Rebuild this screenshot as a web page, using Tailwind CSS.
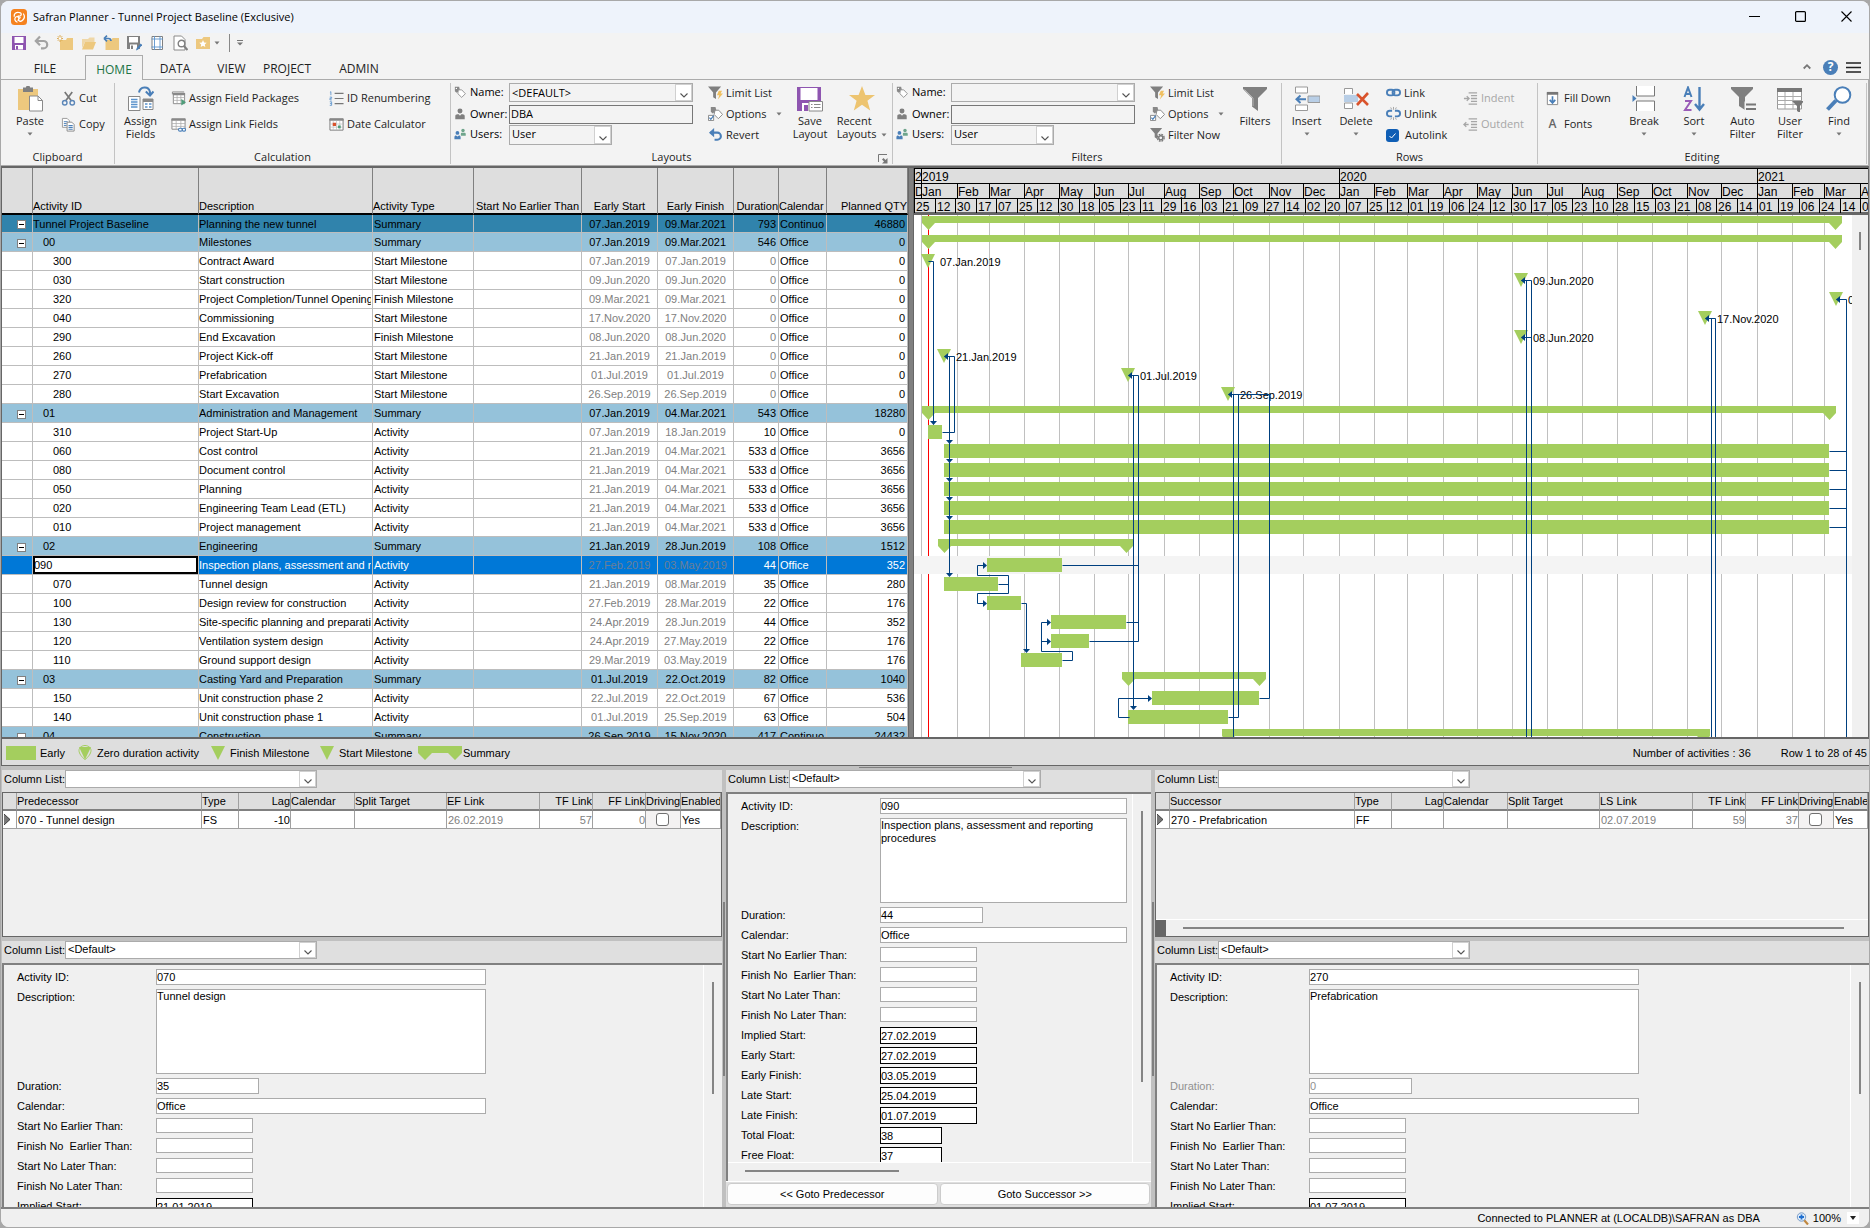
<!DOCTYPE html>
<html lang="en">
<head>
<meta charset="utf-8">
<title>Safran Planner - Tunnel Project Baseline (Exclusive)</title>
<script src="https://cdn.jsdelivr.net/npm/@tailwindcss/browser@4"></script>
</head>
<body class="h-screen overflow-hidden bg-[#a8a8a8] p-px font-['Liberation_Sans',Arial,sans-serif] text-[11px] leading-4 text-black">

<!-- Icon library -->
<svg class="hidden" aria-hidden="true">
  <symbol id="i-app" viewBox="0 0 16 16"><rect width="16" height="16" rx="3.5" fill="#f5821f"/><path d="M3.2 7.2C3 4.600 5 3.200 7.500 3.400c1.900.1 2.900 1 2.700 2.200-.2 1.300-1.700 1.900-3 1.400M6 13c-1.800-.8-2.600-2.500-1.900-4 .6-1.300 2-1.700 3-1 1 .7.900 2.200 0 3.200M12.500 5c1.200 1.800 1 4.300-.7 6-1.400 1.400-3 1.700-3.800.7-.8-1-.2-2.400 1.200-3" fill="none" stroke="#fff" stroke-width="1.300" stroke-linecap="round"/></symbol>
  <symbol id="i-save" viewBox="0 0 16 16"><path d="M1 1h14v14H1z" fill="#8e55b0"/><path d="M3.500 2h9v6h-9zM4 10h8v4.500H4z" fill="#fff"/><path d="M5 11h2v3.500H5z" fill="#8e55b0"/></symbol>
  <symbol id="i-undo" viewBox="0 0 16 16"><path d="M3 6h6.500a3.700 3.700 0 0 1 0 7.400H7" fill="none" stroke="#a3a3a3" stroke-width="2.200"/><path d="M6 1.500L1.800 6 6 10.300" fill="none" stroke="#a3a3a3" stroke-width="2.200"/></symbol>
  <symbol id="i-newf" viewBox="0 0 16 16"><path d="M3 5h6l1-2h6v12H3z" fill="#edc87e"/><path d="M3 0v7M0 3.500h6M.8 1.200l4.400 4.600M5.200 1.200L.8 5.800" stroke="#d9a445" stroke-width=".9"/><circle cx="3" cy="3.500" r="1.200" fill="#fff"/></symbol>
  <symbol id="i-openf" viewBox="0 0 16 16"><path d="M2 4h6l1.500-1.500h5V7H5l-3 6z" fill="#edc87e" opacity=".65"/><path d="M5 7h11l-3 7.500H2z" fill="#edc87e"/></symbol>
  <symbol id="i-prevf" viewBox="0 0 16 16"><path d="M2.500 5h6l1-2H16v12H2.500z" fill="#edc87e"/><path d="M1 3.500h4.500A2.500 2.500 0 0 1 8 6M1 3.500L4 .7M1 3.500L4 6.300" stroke="#4a7fb8" stroke-width="1.700" fill="none"/></symbol>
  <symbol id="i-saveas" viewBox="0 0 16 16"><path d="M1 1h13v13H1z" fill="#808080"/><path d="M3 2h9v5.500H3zM4 9.500h7V14H4z" fill="#fff"/><path d="M5 10.500h2V14H5z" fill="#808080"/><path d="M10 15.500l.7-2.500 4-4.500 1.500 1.500-4 4.500z" fill="#4a7fb8"/></symbol>
  <symbol id="i-grid" viewBox="0 0 16 16"><path d="M3 1.500h10.500v13H3z" fill="#fff" stroke="#808080"/><path d="M5.500 1v14M11 1v14M2.500 4h11.500M2.500 12h11.500" stroke="#5b93cc" stroke-width=".9"/></symbol>
  <symbol id="i-preview" viewBox="0 0 16 16"><path d="M2 1h7.500l3.500 3.500V15H2z" fill="#fff" stroke="#8a8a8a"/><circle cx="9.500" cy="8.500" r="3.300" fill="#fff" stroke="#808080" stroke-width="1.400"/><path d="M12 11l3.500 4" stroke="#808080" stroke-width="2"/></symbol>
  <symbol id="i-fav" viewBox="0 0 16 16"><path d="M1 4h6l1.500-2H15v12H1z" fill="#edc87e"/><path d="M8 5l1.100 2.400 2.600.3-1.900 1.800.5 2.600L8 10.800l-2.300 1.300.5-2.600-1.900-1.800 2.600-.3z" fill="#fff"/></symbol>
  <symbol id="i-paste" viewBox="0 0 26 26"><path d="M1 3h20v21H1z" fill="#edc87e"/><path d="M6 1.500h3a2 2 0 0 1 4 0h3v4.500H6z" fill="#7f7f7f"/><path d="M12.500 10h8.500l4.500 4.500V25H12.500z" fill="#fff" stroke="#8a8a8a"/><path d="M21 10v4.500h4.500" fill="none" stroke="#8a8a8a"/></symbol>
  <symbol id="i-cut" viewBox="0 0 16 16"><path d="M4 1l7 9.500M12 1L5 10.500" stroke="#777" stroke-width="1.800"/><circle cx="4" cy="12.500" r="2.400" fill="none" stroke="#5b86b8" stroke-width="1.500"/><circle cx="12" cy="12.500" r="2.400" fill="none" stroke="#5b86b8" stroke-width="1.500"/></symbol>
  <symbol id="i-copy" viewBox="0 0 16 16"><path d="M1.500 1.500h5l2.500 2.500v7h-7.500z" fill="#fff" stroke="#999"/><path d="M3 5h4M3 7h3M3 9h3" stroke="#4a7fb8"/><path d="M6.500 5.500h5l2.500 2.500v7H6.500z" fill="#fff" stroke="#888"/><path d="M8 9h4.500M8 11h4.500M8 13h4.500" stroke="#4a7fb8" stroke-width="1.200"/></symbol>
  <symbol id="i-assign" viewBox="0 0 26 26"><path d="M11 6.500c1-6 9.500-7 11-.5V9M17.800 5.500l4.200 4 3.500-4" fill="none" stroke="#4a7fb8" stroke-width="2"/><path d="M.5 10.500h11.500v14H.5z" fill="#fff" stroke="#888"/><path d="M3 13.500h6.500M3 16h6.500M3 18.500h6.500M3 21h6.500" stroke="#5b93cc" stroke-width="1.300"/><path d="M15 13h10v10.500H15z" fill="#fff" stroke="#888"/><path d="M15 13h10v3H15z" fill="#888"/><path d="M17 18h2.500M21 18h2.500M17 21h2.500M21 21h2.500" stroke="#5b93cc" stroke-width="1.300"/></symbol>
  <symbol id="i-tbl" viewBox="0 0 16 16"><path d="M1.500 3.500V1H14M2.500 2.500h12v11h-12z" fill="#fff" stroke="#888"/><path d="M2 2h13v2.500H2z" fill="#888"/><path d="M2.500 7h12M2.500 10h12M6.500 4v9M10.500 4v9" stroke="#aaa" stroke-width=".8"/><path d="M11 8.500l5 3.500-5 3.500z" fill="#4f9d7a"/></symbol>
  <symbol id="i-tblink" viewBox="0 0 16 16"><path d="M1 2h14v11H1z" fill="#fff" stroke="#888"/><path d="M.5 1.500h15V4H.5z" fill="#888"/><path d="M1 7h14M1 10h14M5.500 4v9M10.500 4v9" stroke="#aaa" stroke-width=".8"/><rect x="8" y="12" width="4" height="3" rx="1.500" fill="#fff" stroke="#4a7fb8" stroke-width="1.200"/><rect x="12" y="12" width="3.500" height="3" rx="1.500" fill="#fff" stroke="#4a7fb8" stroke-width="1.200"/></symbol>
  <symbol id="i-num" viewBox="0 0 16 16"><path d="M6 2.500h9.500M6 8h9.500M6 13.500h9.500" stroke="#777" stroke-width="1.300"/><path d="M1 1.500l1-.8V4.500M.8 6.500h2v1.300H1V9.500h2M.8 11.500h2v3.800h-2M1 13.400h1.800" fill="none" stroke="#5b93cc" stroke-width=".9"/></symbol>
  <symbol id="i-cal" viewBox="0 0 16 16"><path d="M1 2h14v12H1z" fill="#fff" stroke="#777"/><path d="M.5 1.500h15v2.500H.5z" fill="#888"/><path d="M1 7.500h14M1 10.800h14M4.500 4v10M8 4v10M11.500 4v10" stroke="#bbb" stroke-width=".7"/><path d="M4 6h3.500v3.500H4z" fill="#d9532c"/><path d="M9.500 9h3v3h-3z" fill="#4f9d7a"/></symbol>
  <symbol id="i-tag" viewBox="0 0 14 14"><path d="M1 1h5l1 4-4 3L1 6z" fill="#888"/><path d="M5 4.500h4L13.300 9 9 13.300 4.500 9z" fill="#fff" stroke="#888"/><circle cx="2.800" cy="2.800" r=".8" fill="#fff"/></symbol>
  <symbol id="i-man" viewBox="0 0 14 14"><circle cx="7" cy="3.500" r="2.900" fill="#7f7f7f"/><path d="M1.500 13V9.500c0-1.500 1-2.300 2.500-2.300h1.500L7 9l1.500-1.800H10c1.500 0 2.500.8 2.500 2.300V13z" fill="#7f7f7f"/></symbol>
  <symbol id="i-men" viewBox="0 0 14 14"><circle cx="10.500" cy="3" r="2" fill="#6fa58c"/><path d="M8 9V7c0-1 .6-1.600 1.500-1.600h2.600c1 0 1.600.6 1.600 1.600v2z" fill="#6fa58c"/><circle cx="4" cy="5.800" r="2.200" fill="#4a7fb8"/><path d="M.5 13v-2.500C.5 9.500 1.300 8.700 2.300 8.700L4 10l1.800-1.300c1.200 0 1.900.8 1.900 1.800V13z" fill="#4a7fb8"/></symbol>
  <symbol id="i-limit" viewBox="0 0 16 16"><path d="M0 1.500h14L8.500 8v7l-3-2V8z" fill="#7f7f7f"/><path d="M11.500 6h3.500l-1.500 3H16l-5.500 6.500L12 11h-2.500z" fill="#f0c060"/></symbol>
  <symbol id="i-opt" viewBox="0 0 16 16"><path d="M3 1h5l1 4-4 3-2-2z" fill="#888"/><path d="M7.500 4.500h4l4 4.500-4.500 4.500L6.500 9z" fill="#fff" stroke="#888"/><path d="M.5 10h5.500v5.500H.5z" fill="#fff" stroke="#888"/><path d="M1.500 12.500l1.500 1.700 3-4" stroke="#4a7fb8" stroke-width="1.300" fill="none"/></symbol>
  <symbol id="i-revert" viewBox="0 0 16 16"><path d="M2.500 6h7.500a3.700 3.700 0 0 1 0 7.500H7" fill="none" stroke="#4a7fb8" stroke-width="2.200"/><path d="M6.500 1L1 6l5.500 5z" fill="#4a7fb8"/></symbol>
  <symbol id="i-fnow" viewBox="0 0 16 16"><path d="M0 1h13L8 7v6l-3-2V7z" fill="#7f7f7f"/><circle cx="11.500" cy="11.500" r="3.600" fill="none" stroke="#777" stroke-width="1.400" stroke-dasharray="1.900 .95"/><circle cx="11.500" cy="11.500" r="2.200" fill="#f3f3f3" stroke="#777" stroke-width="1.500"/></symbol>
  <symbol id="i-savelay" viewBox="0 0 26 26"><path d="M0 1h24v24H0z" fill="#8e55b0"/><path d="M3.500 2h17v12h-17zM5 17h14v8H5z" fill="#fff"/><path d="M7 19h4v6H7z" fill="#8e55b0"/><path d="M12 15.500h13.500v9.500H12z" fill="#fff" stroke="#888"/><path d="M14 18.500h1.500M17 18.500h6.500M14 21.500h1.500M17 21.500h6.500" stroke="#888"/></symbol>
  <symbol id="i-star" viewBox="0 0 26 26"><path d="M13 0l3.400 9H26l-7.600 5.800L21.200 24.500 13 18.800 4.800 24.500 7.600 14.800 0 9h9.600z" fill="#edc470"/></symbol>
  <symbol id="i-funnel" viewBox="0 0 26 26"><path d="M1 1h24v2L16 12v13l-6-4.500V12L1 3z" fill="#7f7f7f"/><path d="M2.500 3.500L11 12v8" fill="none" stroke="#b5b5b5"/></symbol>
  <symbol id="i-insert" viewBox="0 0 26 26"><path d="M1.500 7V1h12v6M1.500 19v5.500h12V19z" fill="#fff" stroke="#999"/><path d="M1.500 7h12" stroke="#999"/><path d="M14 10h12v6.500H14z" fill="#b8cee6" stroke="#999"/><path d="M12 13.200H3M6.500 9.500L2.500 13.200l4 3.800" stroke="#4a7fb8" stroke-width="2" fill="none"/></symbol>
  <symbol id="i-delete" viewBox="0 0 26 26"><path d="M1.500 8V2.500h8V8M1.500 17v5.500h8V17z" fill="#fff" stroke="#999"/><path d="M1 9h14v7H1z" fill="#b8cee6"/><path d="M14 8l11 11M25 7L14 19" stroke="#d9532c" stroke-width="2.600"/></symbol>
  <symbol id="i-link" viewBox="0 0 16 16"><rect x="1" y="5" width="8" height="6" rx="3" fill="none" stroke="#4a7fb8" stroke-width="2"/><rect x="7" y="5" width="8" height="6" rx="3" fill="none" stroke="#4a7fb8" stroke-width="2"/></symbol>
  <symbol id="i-unlink" viewBox="0 0 16 16"><path d="M6.500 5H4a3 3 0 0 0 0 6h2.500M9.500 5H12a3 3 0 0 1 0 6H9.500" fill="none" stroke="#4a7fb8" stroke-width="2"/><path d="M8 1v3M8 12v3M5 1.500l1 2M11 1.500l-1 2M5 14.500l1-2M11 14.500l-1-2" stroke="#999" stroke-width=".9"/></symbol>
  <symbol id="i-indent" viewBox="0 0 16 16"><path d="M1 8h5M4 5.500L6.500 8 4 10.500M6 2h9M8.500 5h6.500M8.500 8h6.500M8.500 11h6.500M6 14h9" fill="none" stroke="#a6a6a6" stroke-width="1.400"/></symbol>
  <symbol id="i-outdent" viewBox="0 0 16 16"><path d="M1 8h5M3.500 5.500L1 8l2.500 2.500M6 2h9M8.500 5h6.500M8.500 8h6.500M8.500 11h6.500M6 14h9" fill="none" stroke="#a6a6a6" stroke-width="1.400"/></symbol>
  <symbol id="i-fill" viewBox="0 0 16 16"><path d="M2.500 1.500h11v13h-11z" fill="#fff" stroke="#888"/><path d="M2 1h12v3H2z" fill="#777"/><path d="M8 5.500v7M5 9.500l3 3.200 3-3.200" fill="none" stroke="#4a7fb8" stroke-width="1.800"/></symbol>
  <symbol id="i-break" viewBox="0 0 26 26"><path d="M5.500 0v10h18V0M5.500 25V15h18v10" fill="#fff" stroke="#777"/><path d="M1.500 9l4 3.500-4 3.500z" fill="#4a7fb8"/></symbol>
  <symbol id="i-sort" viewBox="0 0 26 26"><path d="M3.500 11L7 1.500 10.500 11M4.800 8h4.500" fill="none" stroke="#4a7fb8" stroke-width="2"/><path d="M4 15h6L4 24h6.500" fill="none" stroke="#9a5cb8" stroke-width="2"/><path d="M18.500 1v22M14 18l4.500 5.500L23 18" fill="none" stroke="#4a7fb8" stroke-width="2.400"/></symbol>
  <symbol id="i-auto" viewBox="0 0 26 26"><path d="M1 1h22v2l-8 8v13l-6-4V11L1 3z" fill="#7f7f7f"/><path d="M14.500 15.500H26V25H14.500z" fill="#f3f3f3"/><path d="M16 18.500h10M16 23h10" stroke="#777" stroke-width="2"/></symbol>
  <symbol id="i-user" viewBox="0 0 26 26"><path d="M.5 3h24v20H.5z" fill="#fff" stroke="#999"/><path d="M0 2h25v4H0z" fill="#777"/><path d="M.5 10.500h24M.5 14.500h24M.5 18.500h24M8 6v17M16 6v17" stroke="#aaa"/><path d="M15 15h12l-4 5v7l-3-2v-5z" fill="#777"/></symbol>
  <symbol id="i-find" viewBox="0 0 26 26"><path d="M10 14.500L1.500 23.500" stroke="#4a7fb8" stroke-width="4"/><circle cx="16.500" cy="9" r="7.800" fill="#fff" stroke="#4a7fb8" stroke-width="2"/></symbol>
  <symbol id="i-launch" viewBox="0 0 10 10"><path d="M.5 8V.5H9" fill="none" stroke="#777"/><path d="M4 9.500h5.500V4L7.500 6 5.500 4 4 5.500l2 2z" fill="#777"/></symbol>
  <symbol id="i-chev" viewBox="0 0 10 10"><path d="M1.500 3.500L5 7l3.500-3.500" fill="none" stroke="#555" stroke-width="1.100"/></symbol>
  <symbol id="i-arr" viewBox="0 0 6 4"><path d="M.5.500h5L3 3.500z" fill="#777"/></symbol>
</svg>

<div class="flex h-full flex-col overflow-hidden rounded-lg bg-[#f3f3f3]">

  <header class="font-['Open_Sans','Noto_Sans',sans-serif] text-[11px] text-[#1e1e1e]">
    <!-- Title bar -->
    <div class="flex h-8 items-center bg-[#eef3fb] pb-px pl-[10px] pr-[17px]">
      <svg class="size-4"><use href="#i-app"/></svg>
      <h1 class="ml-[6px] flex-1 text-black">Safran Planner - Tunnel Project Baseline (Exclusive)</h1>
      <div class="flex items-center gap-[35px]">
        <button aria-label="Minimize"><svg class="size-[11px]" viewBox="0 0 11 11"><path d="M0 5.500h11" stroke="#000" stroke-width="1.100"/></svg></button>
        <button aria-label="Maximize"><svg class="size-[11px]" viewBox="0 0 11 11"><rect x=".6" y=".6" width="9.800" height="9.800" rx="1" fill="none" stroke="#000" stroke-width="1.200"/></svg></button>
        <button aria-label="Close"><svg class="size-[11px]" viewBox="0 0 11 11"><path d="M.5.500l10 10M10.500.500l-10 10" stroke="#000" stroke-width="1.100"/></svg></button>
      </div>
    </div>
    <!-- Quick access -->
    <div class="flex h-[22px] items-center gap-[7px] pb-[2px] pl-[10px]" id="qat"></div>
    <!-- Tabs -->
    <nav class="flex h-[25px] border-b border-[#ababab] text-[12px]">
      <button class="w-[88px] pt-[3px]">FILE</button>
      <button class="-ml-1 -mb-px w-[58px] border border-b-0 border-[#ababab] bg-[#f3f3f3] pt-[3px] text-[#217346]">HOME</button>
      <button class="w-[64px] pt-[3px]">DATA</button>
      <button class="w-[49px] pt-[3px]">VIEW</button>
      <button class="w-[62px] pt-[3px]">PROJECT</button>
      <button class="w-[82px] pt-[3px]">ADMIN</button>
      <div class="ml-auto flex items-center gap-2 pr-2">
        <button aria-label="Collapse ribbon" class="mr-1"><svg class="size-2" viewBox="0 0 8 8"><path d="M.7 5.500L4 2.200l3.300 3.300" fill="none" stroke="#777" stroke-width="1.800"/></svg></button>
        <button aria-label="Help" class="flex size-[15px] items-center justify-center rounded-full bg-[#4a7fb8] text-[12px] font-bold text-white">?</button>
        <button aria-label="Menu"><svg class="h-[11px] w-[15px]" viewBox="0 0 15 11"><path d="M0 1h15M0 5.500h15M0 10h15" stroke="#222" stroke-width="1.300"/></svg></button>
      </div>
    </nav>
    <!-- Ribbon -->
    <div class="flex h-[85px] border-r border-[#ababab] pt-[3px]" id="ribbon"></div>
    <div class="h-[3px] border-t border-[#ababab] bg-[#666]"></div>
  </header>

  <!-- Grid and Gantt -->
  <main class="flex min-h-0 flex-[569_1_0px] border-l border-[#666] bg-white">
    <div class="w-[906px] shrink-0 overflow-hidden">
      <table class="w-full table-fixed border-separate border-spacing-0">
        <colgroup><col class="w-[31px]"><col class="w-[166px]"><col class="w-[174px]"><col class="w-[101px]"><col class="w-[108px]"><col class="w-[76px]"><col class="w-[76px]"><col class="w-[45px]"><col class="w-[48px]"><col class="w-[81px]"></colgroup>
        <thead><tr class="bg-[#dedede]" id="gridhead"></tr></thead>
        <tbody id="grid"></tbody>
      </table>
    </div>
    <div class="w-[6px] shrink-0 border-x border-[#666] bg-[#808080]"></div>
    <div class="flex min-w-0 flex-1 flex-col border-r border-[#666]">
      <svg class="h-[47px] w-full shrink-0 bg-[#dedede]" id="scale"></svg>
      <div class="flex min-h-0 flex-1">
        <svg class="h-full min-w-0 flex-1" id="gantt"></svg>
        <div class="w-[16px] bg-[#f0f0f0] pl-[7px] pt-[17px]"><div class="h-[18px] w-0.5 bg-[#858585]"></div></div>
      </div>
    </div>
  </main>

  <!-- Legend -->
  <div class="flex h-[29px] shrink-0 items-center border-b border-l border-t-2 border-[#666] bg-[#dedede] pl-1 pr-[2px] pt-px">
    <svg class="h-[14px] w-[30px]"><path d="M0 0h30v14H0z" fill="#a4ce5e"/></svg><span class="ml-1 w-[38px]">Early</span>
    <svg class="h-[15px] w-[14px]" viewBox="0 0 14 15"><path d="M7 .5c3 0 6 2 6 5s-3 7-6 9c-3-2-6-6-6-9s3-5 6-5z" fill="none" stroke="#a4ce5e"/><path d="M1 2h12L7 14.500z" fill="#a4ce5e"/></svg><span class="ml-[5px] w-[114px]">Zero duration activity</span>
    <svg class="h-[14px] w-[14px]"><path d="M0 0h14L7 14z" fill="#a4ce5e"/></svg><span class="ml-[5px] w-[90px]">Finish Milestone</span>
    <svg class="h-[14px] w-[14px]"><path d="M0 0h14L7 14z" fill="#a4ce5e"/></svg><span class="ml-[5px] w-[79px]">Start Milestone</span>
    <svg class="h-[14px] w-[44px]"><path d="M0 0h44v7l-7 7-7-7H14l-7 7-7-7z" fill="#a4ce5e"/></svg><span class="ml-px">Summary</span>
    <span class="ml-auto">Number of activities : 36</span><span class="ml-[30px]">Row 1 to 28 of 45</span>
  </div>
  <div class="flex h-1 shrink-0 justify-center bg-[#c0c0c0]"><div class="mt-px h-px w-[153px] bg-[#808080]"></div></div>

  <!-- Detail panels -->
  <section class="flex min-h-0 flex-[437_1_0px] bg-[#c0c0c0] pl-px" id="panels"></section>

  <!-- Status bar -->
  <footer class="flex h-5 shrink-0 items-center justify-end border-t-2 border-[#808080] bg-[#f0f0f0] pr-[10px]">
    <span class="mr-[36px]">Connected to PLANNER at (LOCALDB)\SAFRAN as DBA</span>
    <svg class="mr-1 size-[13px]" viewBox="0 0 13 13"><path d="M8 8l4 4.500" stroke="#c08840" stroke-width="2.200"/><circle cx="5.500" cy="5" r="4.200" fill="#dceaf8" stroke="#7a9cc6"/><path d="M5.500 2.500v5M3 5h5" stroke="#1f6fd0" stroke-width="1.800"/></svg>
    <span>100%</span>
    <button aria-label="Zoom level" class="ml-[6px] flex size-[12px] items-center justify-center bg-white"><svg class="h-1 w-[6px]" viewBox="0 0 6 4"><path d="M0 0h6L3 4z" fill="#222"/></svg></button>
  </footer>
</div>

<script>
const $ = id => document.getElementById(id);
const icon = (n, c) => `<svg class="${c || 'size-[15px] shrink-0'}"><use href="#i-${n}"/></svg>`;

/* ---------- quick access toolbar ---------- */
$('qat').innerHTML = [['save','Save'],['undo','Undo'],['newf','New'],['openf','Open'],['prevf','Previous'],['saveas','Save as'],['grid','Page setup'],['preview','Preview'],['fav','Favourites']]
  .map(([n, t]) => `<button aria-label="${t}">${icon(n, 'size-4')}</button>`).join('') +
  `${icon('arr', '-ml-1 h-1 w-[6px]')}<span class="ml-[2px] h-[18px] w-px bg-[#888]"></span><button aria-label="Customize"><svg class="h-[6px] w-[6px]" viewBox="0 0 6 6"><path d="M0 .5h6" stroke="#777"/><path d="M0 2.500h6L3 5.500z" fill="#777"/></svg></button>`;

/* ---------- ribbon ---------- */
const big = (n, label, w, arrow) => `<button class="${w} flex shrink-0 flex-col items-center pt-[3px] leading-[13px]">${icon(n, 'size-[26px] shrink-0')}<span class="mt-[2px] text-center">${label}</span>${arrow ? icon('arr', 'mt-[5px] h-1 w-[6px]') : ''}</button>`;
const two = (items, w, cls) => `<div class="${w} flex shrink-0 flex-col pt-[2px]">${items.map(([n, t]) => `<button class="${cls || ''} flex h-[26px] items-center gap-[3px] whitespace-nowrap">${icon(n)}${t}</button>`).join('')}</div>`;
const three = (items, w) => `<div class="${w} flex shrink-0 flex-col">${items.map(([n, t, a]) => `<button class="flex h-[21px] items-center gap-[3px] whitespace-nowrap pb-[2px]">${icon(n)}${t}${a ? icon('arr', 'ml-[6px] h-1 w-[6px]') : ''}</button>`).join('')}</div>`;
const group = (label, w, inner, extra) => `<div class="${w} relative flex h-[81px] shrink-0 flex-col border-r border-[#c3c3c3]"><div class="flex h-[67px]">${inner}</div><div class="text-center leading-[14px]">${label}</div>${extra || ''}</div>`;
const combo = (id, value, w, h, cls) => `<div class="${w} ${h} ${cls} relative shrink-0 border border-[#ababab]"><select id="${id}" class="block h-full w-full appearance-none bg-transparent pb-px pl-[2px] leading-[13px]"><option>${value}</option></select><span class="pointer-events-none absolute inset-y-0 right-0 flex w-[17px] items-end justify-center border border-[#d0d0d0] bg-white">${icon('chev', 'size-[10px]')}</span></div>`;
const fields = (p, name, owner) => `<div class="w-[257px] shrink-0 pl-[3px] text-black">
  <div class="flex h-[21px] items-start"><label for="${p}n" class="flex w-[55px] items-center gap-1 leading-[18px]">${icon('tag', 'size-[12px]')}Name:</label>${combo(p + 'n', name, 'w-[184px]', 'h-[19px]', '')}</div>
  <div class="flex h-[21px] items-center"><label for="${p}o" class="flex w-[55px] items-center gap-1 pb-[2px]">${icon('man', 'size-[12px]')}Owner:</label><input id="${p}o" value="${owner}" class="h-[19px] w-[184px] border border-[#777] bg-transparent pb-[3px] pl-px"></div>
  <div class="flex h-[20px] items-center"><label for="${p}u" class="flex w-[55px] items-center gap-1 pb-[3px]">${icon('men', 'size-[12px]')}Users:</label>${combo(p + 'u', 'User', 'w-[103px]', 'h-[20px]', 'pb-[2px]')}</div></div>`;

$('ribbon').innerHTML =
  group('Clipboard', 'w-[114px]', big('paste', 'Paste', 'w-[58px]', 1) + two([['cut', 'Cut'], ['copy', 'Copy']], 'w-[52px] pl-[2px]')) +
  group('Calculation', 'w-[336px]', big('assign', 'Assign<br>Fields', 'w-[51px]') + two([['tbl', 'Assign Field Packages'], ['tblink', 'Assign Link Fields']], 'w-[157px] pl-[5px]') + two([['num', 'ID Renumbering'], ['cal', 'Date Calculator']], 'w-[110px] pl-[6px]')) +
  group('Layouts', 'w-[442px]', fields('l', '&lt;DEFAULT&gt;', 'DBA') + three([['limit', 'Limit List'], ['opt', 'Options', 1], ['revert', 'Revert']], 'w-[77px]') + big('savelay', 'Save<br>Layout', 'w-[50px]') + `<button class="flex w-[54px] shrink-0 flex-col items-center pt-[3px] leading-[13px]">${icon('star', 'size-[26px] shrink-0')}<span class="mt-[2px] whitespace-nowrap text-left">Recent<br>Layouts <svg class="ml-[2px] inline h-1 w-[6px]"><use href="#i-arr"/></svg></span></button>`, `<button aria-label="Layout settings" class="absolute bottom-0 right-[4px]">${icon('launch', 'size-[10px]')}</button>`) +
  group('Filters', 'w-[389px]', fields('f', '', '') + three([['limit', 'Limit List'], ['opt', 'Options', 1], ['fnow', 'Filter Now']], 'w-[80px]') + big('funnel', 'Filters', 'w-[50px]')) +
  group('Rows', 'w-[256px]', big('insert', 'Insert', 'w-[49px]', 1) + big('delete', 'Delete', 'w-[50px]', 1) + `<div class="w-[78px] pl-[5px]"><button class="flex h-[21px] items-center gap-[3px] pb-[2px]">${icon('link')}Link</button><button class="flex h-[21px] items-center gap-[3px] pb-[2px]">${icon('unlink')}Unlink</button><label class="flex h-[21px] items-center gap-[6px] pb-px"><input type="checkbox" checked class="m-0 size-[13px] appearance-none rounded-[3px] bg-[#0f5eb5] bg-[url('data:image/svg+xml,%3Csvg%20xmlns=%22http://www.w3.org/2000/svg%22%20viewBox=%220%200%2013%2013%22%3E%3Cpath%20d=%22M3.500%207l2%202%204-4.500%22%20fill=%22none%22%20stroke=%22white%22/%3E%3C/svg%3E')]">Autolink</label></div>` + two([['indent', 'Indent'], ['outdent', 'Outdent']], 'w-[66px] pl-[4px]', 'text-[#a6a6a6]')) +
  group('Editing', 'w-[329px]', `<div class="flex w-[81px] shrink-0 flex-col pl-[7px] pt-[2px]"><button class="flex h-[26px] items-center gap-1">${icon('fill')}Fill Down</button><button class="flex h-[26px] items-center gap-1"><span class="w-[15px] text-center text-[12px] font-semibold text-[#666]">A</span>Fonts</button></div>` + big('break', 'Break', 'w-[50px]', 1) + big('sort', 'Sort', 'w-[50px]', 1) + big('auto', 'Auto<br>Filter', 'w-[47px]') + big('user', 'User<br>Filter', 'w-[48px]') + big('find', 'Find', 'w-[50px]', 1));

/* ---------- activity grid ---------- */
const heads = [['', ''], ['Activity ID', ''], ['Description', ''], ['Activity Type', ''], ['Start No Earlier Than', 'text-center'], ['Early Start', 'text-center'], ['Early Finish', 'text-center'], ['Duration', 'text-right'], ['Calendar', ''], ['Planned QTY', 'text-right']];
$('gridhead').innerHTML = heads.map(([t, c]) => `<th class="h-[47px] overflow-hidden whitespace-nowrap border-b-2 border-r border-b-black border-r-[#808080] p-0 text-left align-bottom font-normal leading-[13px]"><div class="${c}">${t}</div></th>`).join('');
const S = 'Summary', A = 'Activity', SM = 'Start Milestone', FM = 'Finish Milestone';
const rows = [
  [0, 'Tunnel Project Baseline', 'Planning the new tunnel', S, '07.Jan.2019', '09.Mar.2021', '793', 'Continuous', '46880'],
  [1, '00', 'Milestones', S, '07.Jan.2019', '09.Mar.2021', '546', 'Office', '0'],
  [2, '300', 'Contract Award', SM, '07.Jan.2019', '07.Jan.2019', '0', 'Office', '0'],
  [2, '030', 'Start construction', SM, '09.Jun.2020', '09.Jun.2020', '0', 'Office', '0'],
  [2, '320', 'Project Completion/Tunnel Opening', FM, '09.Mar.2021', '09.Mar.2021', '0', 'Office', '0'],
  [2, '040', 'Commissioning', SM, '17.Nov.2020', '17.Nov.2020', '0', 'Office', '0'],
  [2, '290', 'End Excavation', FM, '08.Jun.2020', '08.Jun.2020', '0', 'Office', '0'],
  [2, '260', 'Project Kick-off', SM, '21.Jan.2019', '21.Jan.2019', '0', 'Office', '0'],
  [2, '270', 'Prefabrication', SM, '01.Jul.2019', '01.Jul.2019', '0', 'Office', '0'],
  [2, '280', 'Start Excavation', SM, '26.Sep.2019', '26.Sep.2019', '0', 'Office', '0'],
  [1, '01', 'Administration and Management', S, '07.Jan.2019', '04.Mar.2021', '543', 'Office', '18280'],
  [2, '310', 'Project Start-Up', A, '07.Jan.2019', '18.Jan.2019', '10', 'Office', '0'],
  [2, '060', 'Cost control', A, '21.Jan.2019', '04.Mar.2021', '533 d', 'Office', '3656'],
  [2, '080', 'Document control', A, '21.Jan.2019', '04.Mar.2021', '533 d', 'Office', '3656'],
  [2, '050', 'Planning', A, '21.Jan.2019', '04.Mar.2021', '533 d', 'Office', '3656'],
  [2, '020', 'Engineering Team Lead (ETL)', A, '21.Jan.2019', '04.Mar.2021', '533 d', 'Office', '3656'],
  [2, '010', 'Project management', A, '21.Jan.2019', '04.Mar.2021', '533 d', 'Office', '3656'],
  [1, '02', 'Engineering', S, '21.Jan.2019', '28.Jun.2019', '108', 'Office', '1512'],
  [3, '090', 'Inspection plans, assessment and reporting', A, '27.Feb.2019', '03.May.2019', '44', 'Office', '352'],
  [2, '070', 'Tunnel design', A, '21.Jan.2019', '08.Mar.2019', '35', 'Office', '280'],
  [2, '100', 'Design review for construction', A, '27.Feb.2019', '28.Mar.2019', '22', 'Office', '176'],
  [2, '130', 'Site-specific planning and preparation', A, '24.Apr.2019', '28.Jun.2019', '44', 'Office', '352'],
  [2, '120', 'Ventilation system design', A, '24.Apr.2019', '27.May.2019', '22', 'Office', '176'],
  [2, '110', 'Ground support design', A, '29.Mar.2019', '03.May.2019', '22', 'Office', '176'],
  [1, '03', 'Casting Yard and Preparation', S, '01.Jul.2019', '22.Oct.2019', '82', 'Office', '1040'],
  [2, '150', 'Unit construction phase 2', A, '22.Jul.2019', '22.Oct.2019', '67', 'Office', '536'],
  [2, '140', 'Unit construction phase 1', A, '01.Jul.2019', '25.Sep.2019', '63', 'Office', '504'],
  [1, '04', 'Construction', S, '26.Sep.2019', '15.Nov.2020', '417', 'Continuous', '24432'],
];
const bgs = ['bg-[#3083ac]', 'bg-[#95c2da]', 'bg-white', 'bg-[#0078d7] text-white'];
const pads = ['pl-0', 'pl-[10px]', 'pl-[20px]', 'pl-0'];
$('grid').innerHTML = rows.map((r, i) => {
  const lv = r[0], dim = lv === 2 ? 'text-[#808080]' : lv === 3 ? 'text-[#6b7f96]' : '';
  const durDim = r[6] === '0' ? 'text-[#808080]' : '';
  const h = i ? 'h-[19px]' : 'h-[18px]';
  const td = (t, c) => `<td class="${h} ${c} overflow-hidden whitespace-nowrap border-b border-r border-[#bdbdbd] p-0 leading-[16px]">${t}</td>`;
  const toggle = lv < 2 ? `<button aria-label="Collapse" class="ml-[15px] mt-[2px] flex size-[9px] items-center justify-center border border-[#808080] bg-white"><span class="h-px w-[5px] bg-black"></span></button>` : '';
  const id = lv === 3 ? `<input aria-label="Activity ID" value="${r[1]}" class="block h-[18px] w-full bg-white pl-px text-black outline-2 -outline-offset-2 outline-black">` : r[1];
  return `<tr class="${bgs[lv]}">` + td(toggle, '') + td(id, pads[lv]) + td(`<div class="mr-px overflow-hidden">${r[2]}</div>`, '') + td(r[3], 'pl-px') + td('', '') +
    td(r[4], 'text-center ' + dim) + td(r[5], 'text-center ' + dim) + td(r[6], 'text-right pr-[2px] ' + durDim) + td(`<div class="mr-[2px] overflow-hidden">${r[7]}</div>`, 'pl-px') + td(r[8], 'text-right pr-[2px]') + '</tr>';
}).join('');

/* ---------- time scale: x positions share one canvas with the chart ---------- */
const months = [921, 957, 989, 1024, 1059, 1094, 1128, 1164, 1199, 1233, 1269, 1303, 1339, 1374, 1407, 1443, 1477, 1512, 1547, 1582, 1617, 1652, 1687, 1721, 1757, 1792, 1824, 1860];
const mn = ['Jan', 'Feb', 'Mar', 'Apr', 'May', 'Jun', 'Jul', 'Aug', 'Sep', 'Oct', 'Nov', 'Dec'];
const days = '25 12 30 17 07 25 12 30 18 05 23 11 29 16 03 21 09 27 14 02 20 07 25 12 01 19 06 24 12 30 17 05 23 10 28 15 03 21 08 26 14 01 19 06 24 14 01'.split(' ');
let s = `<g transform="translate(-914,-168)" class="text-[12px]"><path d="M914 168.500H1870M914 183.500H1870M914 198.500H1870M914.500 168V214" stroke="#000"/><path d="M914 213.500H1870" stroke="#666" stroke-width="3"/>`;
s += '<text x="915" y="181">2</text><text x="915" y="196">D</text><path d="M921 169h4v14h-4zM921 184h4v14h-4z" fill="#dedede"/>';
[[921, '2019'], [1339, '2020'], [1757, '2021']].forEach(([x, t]) => s += `<path d="M${x}.500 168V184" stroke="#000"/><text x="${x + 1}" y="181">${t}</text>`);
months.forEach((x, i) => s += `<path d="M${x}.500 184V199" stroke="#000"/><text x="${x + 1}" y="196">${mn[i % 12]}</text>`);
days.forEach((d, i) => { const x = 914 + Math.round(i * 20.57); s += `<path d="M${x}.500 199V213" stroke="#000"/><text x="${x + 2}" y="211">${d}</text>`; });
$('scale').innerHTML = s + '</g>';

/* ---------- Gantt chart ---------- */
const top_ = r => 216 + 19 * r, mid = r => 223 + 19 * r, G = '#a4ce5e', L = '#00407f';
let g = '<g transform="translate(-914,-215)">';
months.forEach(x => g += `<path d="M${x}.500 215V900" stroke="#c0c0c0"/>`);
g += '<path d="M928.500 215V900" stroke="#f00"/><path d="M914 556H1870V574H914z" fill="#f4f4f4"/>';
[[0, 922, 1842], [1, 922, 1842], [10, 922, 1836], [17, 938, 1133], [24, 1122, 1266], [27, 1222, 1710]].forEach(([r, a, b]) => {
  const y = top_(r);
  g += `<path d="M${a} ${y}H${b}V${y + 7}L${b - 6.5} ${y + 14}L${b - 13} ${y + 7}H${a + 13}L${a + 6.5} ${y + 14}L${a} ${y + 7}z" fill="${G}"/>`;
});
[[11, 928, 942], [12, 944, 1829], [13, 944, 1829], [14, 944, 1829], [15, 944, 1829], [16, 944, 1829], [18, 987, 1062], [19, 944, 998], [20, 987, 1021], [21, 1051, 1126], [22, 1051, 1089], [23, 1021, 1062], [25, 1152, 1259], [26, 1128, 1228]]
  .forEach(([r, a, b]) => g += `<path d="M${a} ${top_(r)}H${b}v14H${a}z" fill="${G}"/>`);
[[2, 928, 940, '07.Jan.2019'], [3, 1521, 1533, '09.Jun.2020'], [4, 1836, 1848, '09.Mar.2021'], [5, 1705, 1717, '17.Nov.2020'], [6, 1521, 1533, '08.Jun.2020'], [7, 944, 956, '21.Jan.2019'], [8, 1128, 1140, '01.Jul.2019'], [9, 1228, 1240, '26.Sep.2019']]
  .forEach(([r, x, tx, t]) => g += `<path d="M${x - 7} ${top_(r)}h14l-7 14z" fill="${G}"/><text x="${tx}" y="${top_(r) + 12}">${t}</text>`);
/* dependency lines */
g += `<g fill="none" stroke="${L}" transform="translate(.5,.5)"><path d="M928 261H933V424M942 432H954V356H944M949 356V575
M1521 280H1531V900M1526 280V900M1521 337H1531M1836 299H1846V900M1705 318H1715V900M1711 318V900
M1128 375H1138V641M1133 375V708M1228 394H1269V698H1259M1233 394V900M1238 394V717H1228
M1062 565H1138M1126 622H1138M1089 641H1138M998 584H1008M1008 575V593M1008 575H977V565H985M1008 593H977V603H985
M1021 603H1026V651M1062 660H1072V651H1041V622H1049M1041 641H1049M1129 717H1118V698H1150"/>`;
[12, 13, 14, 15, 16].forEach(r => g += `<path d="M1829 ${mid(r)}H1846"/>`);
g += '</g>';
const down = [[933, 11], [949, 12], [949, 13], [949, 14], [949, 15], [949, 16], [949, 19], [1026, 23], [1133, 26]];
down.forEach(([x, r]) => g += `<path d="M${x - 3} ${top_(r) - 4}h7l-3.500 4z" fill="${L}"/>`);
[[1521, 3], [1836, 4], [1705, 5], [1521, 6], [944, 7], [1128, 8], [1228, 9]].forEach(([x, r]) => g += `<path d="M${x} ${mid(r) + .5}l4-3.500v7z" fill="${L}"/>`);
[[987, 18], [987, 20], [1051, 21], [1051, 22], [1152, 25]].forEach(([x, r]) => g += `<path d="M${x} ${mid(r) + .5}l-4-3.500v7z" fill="${L}"/>`);
$('gantt').innerHTML = g + '</g>';

/* ---------- detail panels ---------- */
const bar = (id, v) => `<div class="flex h-[22px] shrink-0 items-start bg-[#dfdfdf] pl-[2px]"><label for="${id}" class="w-[61px] pt-px whitespace-nowrap">Column List:</label>${combo(id, v, 'w-[252px]', 'h-[18px]', 'bg-white')}</div>`;
const linkTable = (cols, vals) => {
  const w = ['w-[14px]', 'w-[185px]', 'w-[37px]', 'w-[52px]', 'w-[64px]', 'w-[92px]', 'w-[93px]', 'w-[53px]', 'w-[53px]', 'w-[35px]', ''];
  const al = ['', '', '', 'text-right', '', '', '', 'text-right', 'text-right', '', ''];
  return `<table class="w-full table-fixed border-separate border-spacing-0"><colgroup>${w.map(c => `<col class="${c}">`).join('')}</colgroup>
  <thead><tr>${cols.map((c, i) => `<th class="h-[18px] overflow-hidden whitespace-nowrap border-b-2 border-r border-b-[#808080] border-r-[#a0a0a0] bg-[#dedede] p-0 font-normal ${al[i] || 'text-left'}">${c}</th>`).join('')}</tr></thead>
  <tbody><tr>${vals.map((v, i) => `<td class="h-[18px] overflow-hidden whitespace-nowrap border-b border-r border-[#a0a0a0] p-0 pl-px ${al[i]} ${i > 5 && i < 9 ? 'text-[#808080]' : ''} ${i === 9 ? 'bg-[#f4f2f2]' : 'bg-white'}">${i === 9 ? '<input type="checkbox" aria-label="Driving" class="ml-[9px] block size-[13px] appearance-none rounded-[3px] border border-[#707070] bg-white">' : i === 0 ? '<svg class="block h-[11px] w-[6px]" viewBox="0 0 6 11"><path d="M0 0l6 5.500L0 11z" fill="#777"/><path d="M0 0l6 5.500L0 11" fill="none" stroke="#222" stroke-width=".8"/></svg>' : v}</td>`).join('')}</tr></tbody></table>`;
};
const field = (p, [label, v, kind, cls]) => {
  const id = p + label.replace(/\W/g, '');
  const dim = cls === 'dim' ? 'text-[#909090]' : '';
  const shape = { wide: 'h-4 border-[#ababab]', dur: 'h-4 w-[103px] border-[#ababab]', date: 'h-[15px] w-[97px] border-[#ababab]', bdate: 'h-[17px] w-[97px] border-black', bnum: 'h-[17px] w-[62px] border-black', area: 'h-[85px] border-[#ababab]' }[kind];
  const wide = kind === 'wide' || kind === 'area' ? (p === 'm' ? 'w-[247px]' : 'w-[330px]') : '';
  const ctl = kind === 'area' ? `<textarea id="${id}" class="${shape} ${wide} block resize-none border bg-white leading-[13px]">${v}</textarea>` : `<input id="${id}" value="${v}" class="${shape} ${wide} block border bg-white">`;
  return `<div class="${kind === 'area' ? 'h-[89px]' : 'h-5'} ${dim} flex shrink-0 items-start"><label for="${id}" class="w-[139px] shrink-0 whitespace-pre">${label}</label>${ctl}</div>`;
};
const form = (p, list, thumb, hbar) => `<div class="flex min-h-0 flex-[242_1_0px] flex-col border-l-2 border-t-2 border-[#808080] bg-[#f0f0f0]">
  <div class="flex min-h-0 flex-1"><div class="flex min-w-0 flex-1 flex-col overflow-hidden border-r border-white pl-[13px] pt-1">${list.map(f => field(p, f)).join('')}</div>
  <div class="w-[18px] shrink-0 pl-[8px] pt-[17px]"><div class="${thumb} w-0.5 bg-[#858585]"></div></div></div>
  ${hbar ? '<div class="h-[19px] shrink-0 border-t border-white pl-[17px] pt-[7px]"><div class="h-0.5 w-[154px] bg-[#858585]"></div></div>' : ''}</div>`;
const base = (id, desc, dur, cal, implied, dim) => [['Activity ID:', id, 'wide'], ['Description:', desc, 'area'], ['Duration:', dur, 'dur', dim], ['Calendar:', cal, 'wide'], ['Start No Earlier Than:', '', 'date'], ['Finish No  Earlier Than:', '', 'date'], ['Start No Later Than:', '', 'date'], ['Finish No Later Than:', '', 'date'], ['Implied Start:', implied, 'bdate']];
const side = (p, grow, cols, vals, fields, scroll) => `<div class="flex min-w-0 ${grow} flex-col">
  ${bar(p + 'c1', '')}
  <div class="flex min-h-0 flex-[143_1_0px] flex-col border border-[#666] bg-[#f0f0f0]">${linkTable(cols, vals)}${scroll ? '<div class="mt-auto flex h-[17px] items-center border-t border-white pr-[24px]"><div class="h-full w-[10px] bg-[#666]"></div><div class="ml-[17px] h-0.5 flex-1 bg-[#858585]"></div></div>' : ''}</div>
  <div class="h-1 shrink-0"></div>${bar(p + 'c2', '&lt;Default&gt;')}${form(p, fields, 'h-[112px]')}</div>`;
const split = '<div class="flex w-1 shrink-0 flex-col justify-center px-px"><div class="h-[174px] border-x border-[#808080]"></div></div>';
$('panels').innerHTML =
  side('p', 'flex-[720_1_0px]', ['', 'Predecessor', 'Type', 'Lag', 'Calendar', 'Split Target', 'EF Link', 'TF Link', 'FF Link', 'Driving', 'Enabled'], ['', '070 - Tunnel design', 'FS', '-10', '', '', '26.02.2019', '57', '0', '', 'Yes'], base('070', 'Tunnel design', '35', 'Office', '21.01.2019')) + split +
  `<div class="flex min-w-0 flex-[425_1_0px] flex-col bg-[#dfdfdf]">${bar('mc', '&lt;Default&gt;')}${form('m', base('090', 'Inspection plans, assessment and reporting procedures', '44', 'Office', '27.02.2019').concat([['Early Start:', '27.02.2019', 'bdate'], ['Early Finish:', '03.05.2019', 'bdate'], ['Late Start:', '25.04.2019', 'bdate'], ['Late Finish:', '01.07.2019', 'bdate'], ['Total Float:', '38', 'bnum'], ['Free Float:', '37', 'bnum']]), 'h-[271px]', 1)}
   <div class="flex h-[26px] shrink-0 gap-[2px] border-t border-white px-px pb-[2px] pt-px"><button class="flex-1 rounded border border-[#ccc] bg-[#fdfdfd]">&lt;&lt; Goto Predecessor</button><button class="flex-1 rounded border border-[#ccc] bg-[#fdfdfd]">Goto Successor &gt;&gt;</button></div></div>` + split +
  side('s', 'flex-[714_1_0px]', ['', 'Successor', 'Type', 'Lag', 'Calendar', 'Split Target', 'LS Link', 'TF Link', 'FF Link', 'Driving', 'Enabled'], ['', '270 - Prefabrication', 'FF', '', '', '', '02.07.2019', '59', '37', '', 'Yes'], base('270', 'Prefabrication', '0', 'Office', '01.07.2019', 'dim'), 1);
</script>
</body>
</html>
